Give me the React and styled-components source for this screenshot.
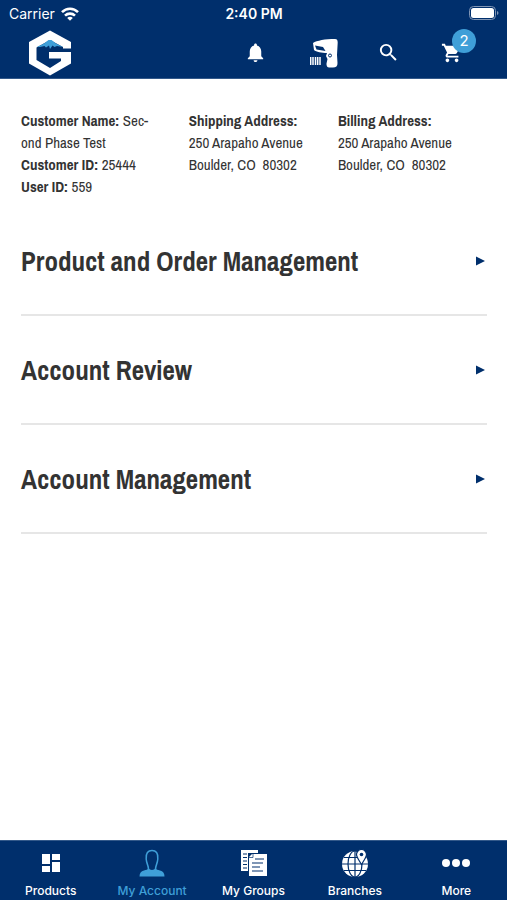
import styled, { createGlobalStyle } from 'styled-components';
import { MdDashboard, MdNotifications, MdSearch, MdShoppingCart } from 'react-icons/md';

const GlobalStyle = createGlobalStyle`
    * {
        box-sizing: border-box;
    }
    body {
        margin: 0;
        background: #ffffff;
        color: #333333;
        font-family: 'Archivo Narrow', 'Liberation Sans Narrow', 'Roboto Condensed', 'Liberation Sans', sans-serif;
    }
    button {
        margin: 0;
        padding: 0;
        border: none;
        background: none;
        color: inherit;
        font: inherit;
        cursor: pointer;
    }
`;

const Page = styled.div`
    display: flex;
    flex-direction: column;
    min-height: 100vh;
`;

const Header = styled.header`
    background: #002f6c;
    color: #ffffff;
    font-family: Inter, sans-serif;
    border-bottom: 1px solid #33598a;
`;

const StatusBar = styled.div`
    display: grid;
    grid-template-columns: 1fr auto 1fr;
    align-items: center;
    height: 27px;
    padding: 0 8px 0 9px;
    font-size: 14px;
    line-height: 16px;
`;

const Carrier = styled.div`
    display: flex;
    align-items: center;
    gap: 6px;
`;

const Time = styled.div`
    font-weight: 600;
`;

const BatterySlot = styled.div`
    display: flex;
    justify-content: flex-end;
`;

const Toolbar = styled.div`
    display: flex;
    align-items: center;
    height: 51px;
    padding: 0 22px 0 28px;
`;

const LogoLink = styled.a`
    display: flex;
    margin-right: auto;
`;

const IconButton = styled.button`
    position: relative;
    display: flex;
    align-items: center;
    justify-content: center;
    width: ${({ $width }) => $width}px;
    height: 48px;
`;

const Badge = styled.span`
    position: absolute;
    top: 0;
    right: 9px;
    width: 24px;
    height: 24px;
    border-radius: 50%;
    background: #3f9fd8;
    font-size: 15px;
    line-height: 24px;
    text-align: center;
`;

const Main = styled.main`
    flex: 1;
    padding: 31px 20px 0 21px;
`;

const Details = styled.div`
    display: grid;
    grid-template-columns: 36fr 32fr 32fr;
    min-height: 97px;
    font-size: 15px;
    line-height: 22px;
`;

const DetailsColumn = styled.div`
    min-width: 0;
    padding-right: 32px;
`;

const Line = styled.div`
    white-space: ${({ $wrap }) => ($wrap ? 'normal' : 'pre')};
`;

const Section = styled.h2`
    margin: 0;
    border-bottom: 2px solid #e6e6e6;
    font-size: 27px;
    line-height: 32px;
    font-weight: 700;
`;

const SectionButton = styled.button`
    display: flex;
    align-items: center;
    justify-content: space-between;
    width: 100%;
    height: 107px;
    padding-right: 1px;
    text-align: left;
`;

const TabBar = styled.nav`
    display: flex;
    height: 60px;
    background: #002f6c;
    border-top: 1px solid #33598a;
    font-family: Inter, sans-serif;
`;

const Tab = styled.a`
    display: flex;
    flex: 1 1 0;
    flex-direction: column;
    align-items: center;
    gap: 4px;
    padding-top: 6px;
    color: ${({ $active }) => ($active ? '#3f9fd8' : '#ffffff')};
    font-size: 12px;
    font-weight: 500;
    line-height: 16px;
    text-decoration: none;
    white-space: nowrap;
`;

const TabIcon = styled.span`
    display: flex;
    align-items: center;
    justify-content: center;
    height: 32px;
`;

function WifiIcon() {
    return (
        <svg width='18' height='14' viewBox='0 0 18 14' fill='none' stroke='#ffffff' strokeWidth='2.6'>
            <path d='M1 5.2C5.5.6 12.5.6 17 5.2' />
            <path d='M4 8.6C6.8 5.9 11.2 5.9 14 8.6' />
            <path d='M9 13.7 6.2 10.9C7.8 9.5 10.2 9.5 11.8 10.9Z' fill='#ffffff' stroke='none' />
        </svg>
    );
}

function BatteryIcon() {
    return (
        <svg width='30' height='15' viewBox='0 0 30 15'>
            <rect x='.5' y='.5' width='26' height='13' rx='4' fill='none' stroke='#8095b4' />
            <rect x='2' y='2' width='23' height='10' rx='2.5' fill='#ffffff' />
            <path d='M28 5c2 .8 2 3.2 0 4Z' fill='#8095b4' />
        </svg>
    );
}

function Logo() {
    return (
        <svg width='44' height='46' viewBox='0 0 44 46'>
            <path
                d='M22 .5 43 12v6.500h-8V17L22 10 8.500 17.500v12.500L22 38l11-7v-2.500H21V22h22v11.500L22 45.500 1 33.500V12Z'
                fill='#ffffff'
            />
            <path d='m9 17 7-3.500 4.500-3.500h3L28 13.500l7 3.500-6-1-2.500 1-2-1.500L22 19l-1-3.500-3 2-1.500-1.500L12 17Z' fill='#3f9fd8' />
        </svg>
    );
}

function ScannerIcon() {
    return (
        <svg width='28' height='30' viewBox='0 0 28 30'>
            <path
                d='M3 5C7 2.500 15 1 25 1c2 0 2.700 1 2.700 3.500L27 17l.5 8c.2 3-1.500 4.500-4.500 4.500h-3c-3 0-3.500-1.500-3.500-4l1-4.500-1.500-3 1-3C12 15 6 14 4 12Z'
                fill='#ffffff'
            />
            <path d='m5 7.500 8 1.500 2.500 4-9-1.500Z' fill='#002f6c' />
            <circle cx='20' cy='17.500' r='1.500' fill='none' stroke='#002f6c' />
            <path d='M.7 19v8M3 19v8M5.5 19v8M7.7 19v8M10 19v8' stroke='#ffffff' strokeWidth='1.5' />
        </svg>
    );
}

function ArrowIcon() {
    return (
        <svg width='11' height='10' viewBox='0 0 11 10'>
            <path d='M1 .5 10 5 1 9.5Z' fill='#002f6c' />
        </svg>
    );
}

function PersonIcon() {
    return (
        <svg width='26' height='28' viewBox='0 0 26 28'>
            <path
                d='M9.500 20.500C9.500 16 7.500 15 7.200 10 6.700 4 9 1.500 13 1.500s6.300 2.500 5.800 8.500c-.3 5-2.300 6-2.300 10.500'
                fill='none'
                stroke='currentColor'
                strokeWidth='1.5'
            />
            <path d='M9.500 19c1.500 2.500 5.500 2.500 7 0 .5 1.500 2.500 2 4.500 2.500 3 .8 4.500 2.500 4.500 6H.5c0-3.500 1.500-5.200 4.500-6 2-.5 4-1 4.500-2.500Z' fill='currentColor' />
        </svg>
    );
}

function GroupsIcon() {
    return (
        <svg width='28' height='28' viewBox='0 0 28 28'>
            <path d='M1 1h17v3H8v18H1Z' fill='currentColor' />
            <path d='M3 5h4M3 8.5h4M3 12h4M3 15.5h4M3 19h4' stroke='#002f6c' strokeWidth='1.2' />
            <path d='M12 5h15v22H9V8Z' fill='currentColor' />
            <path d='M9 8.5h4V5' fill='none' stroke='#002f6c' strokeWidth='.7' />
            <path d='M15 10h9M12 14h11M12 18h8M12 22h11' stroke='#002f6c' strokeWidth='1.2' />
        </svg>
    );
}

function BranchesIcon() {
    return (
        <svg width='28' height='28' viewBox='0 0 28 28'>
            <circle cx='14' cy='15' r='13' fill='currentColor' />
            <g fill='none' stroke='#002f6c' strokeWidth='1.2'>
                <path d='M14 2v26M1 15h26M3 8.5h22M3 21.5h22' />
                <ellipse cx='14' cy='15' rx='7' ry='13' />
            </g>
            <path
                d='M20.500 15.500c-3-5-5-7.500-5-10a5 5 0 0 1 10 0c0 2.500-2 5-5 10Z'
                fill='currentColor'
                stroke='#002f6c'
                strokeWidth='1.2'
            />
            <circle cx='20.5' cy='5.5' r='1.8' fill='#002f6c' />
        </svg>
    );
}

function MoreIcon() {
    return (
        <svg width='28' height='8' viewBox='0 0 28 8' fill='currentColor'>
            <circle cx='4' cy='4' r='4' />
            <circle cx='14' cy='4' r='4' />
            <circle cx='24' cy='4' r='4' />
        </svg>
    );
}

const sections = ['Product and Order Management', 'Account Review', 'Account Management'];

const tabs = [
    { label: 'Products', icon: <MdDashboard size={24} /> },
    { label: 'My Account', icon: <PersonIcon />, active: true },
    { label: 'My Groups', icon: <GroupsIcon /> },
    { label: 'Branches', icon: <BranchesIcon /> },
    { label: 'More', icon: <MoreIcon /> },
];

function Address({ title }) {
    return (
        <DetailsColumn>
            <Line><b>{title}</b></Line>
            <Line>250 Arapaho Avenue</Line>
            <Line>{'Boulder, CO  80302'}</Line>
        </DetailsColumn>
    );
}

function App() {
    return (
        <Page>
            <GlobalStyle />
            <Header>
                <StatusBar>
                    <Carrier>Carrier <WifiIcon /></Carrier>
                    <Time>2:40 PM</Time>
                    <BatterySlot><BatteryIcon /></BatterySlot>
                </StatusBar>
                <Toolbar>
                    <LogoLink href='#home' aria-label='Home'><Logo /></LogoLink>
                    <IconButton $width={72} aria-label='Notifications'><MdNotifications size={23} /></IconButton>
                    <IconButton $width={66} aria-label='Scan'><ScannerIcon /></IconButton>
                    <IconButton $width={62} aria-label='Search'><MdSearch size={23} /></IconButton>
                    <IconButton $width={66} aria-label='Cart'>
                        <MdShoppingCart size={22} />
                        <Badge>2</Badge>
                    </IconButton>
                </Toolbar>
            </Header>
            <Main>
                <Details>
                    <DetailsColumn>
                        <Line $wrap><b>Customer Name:</b> Sec&shy;ond Phase Test</Line>
                        <Line><b>Customer ID:</b> 25444</Line>
                        <Line><b>User ID:</b> 559</Line>
                    </DetailsColumn>
                    <Address title='Shipping Address:' />
                    <Address title='Billing Address:' />
                </Details>
                {sections.map((title) => (
                    <Section key={title}>
                        <SectionButton aria-expanded='false'>
                            {title}
                            <ArrowIcon />
                        </SectionButton>
                    </Section>
                ))}
            </Main>
            <TabBar>
                {tabs.map(({ label, icon, active }) => (
                    <Tab key={label} href='#tab' $active={active}>
                        <TabIcon>{icon}</TabIcon>
                        {label}
                    </Tab>
                ))}
            </TabBar>
        </Page>
    );
}

export default App;
